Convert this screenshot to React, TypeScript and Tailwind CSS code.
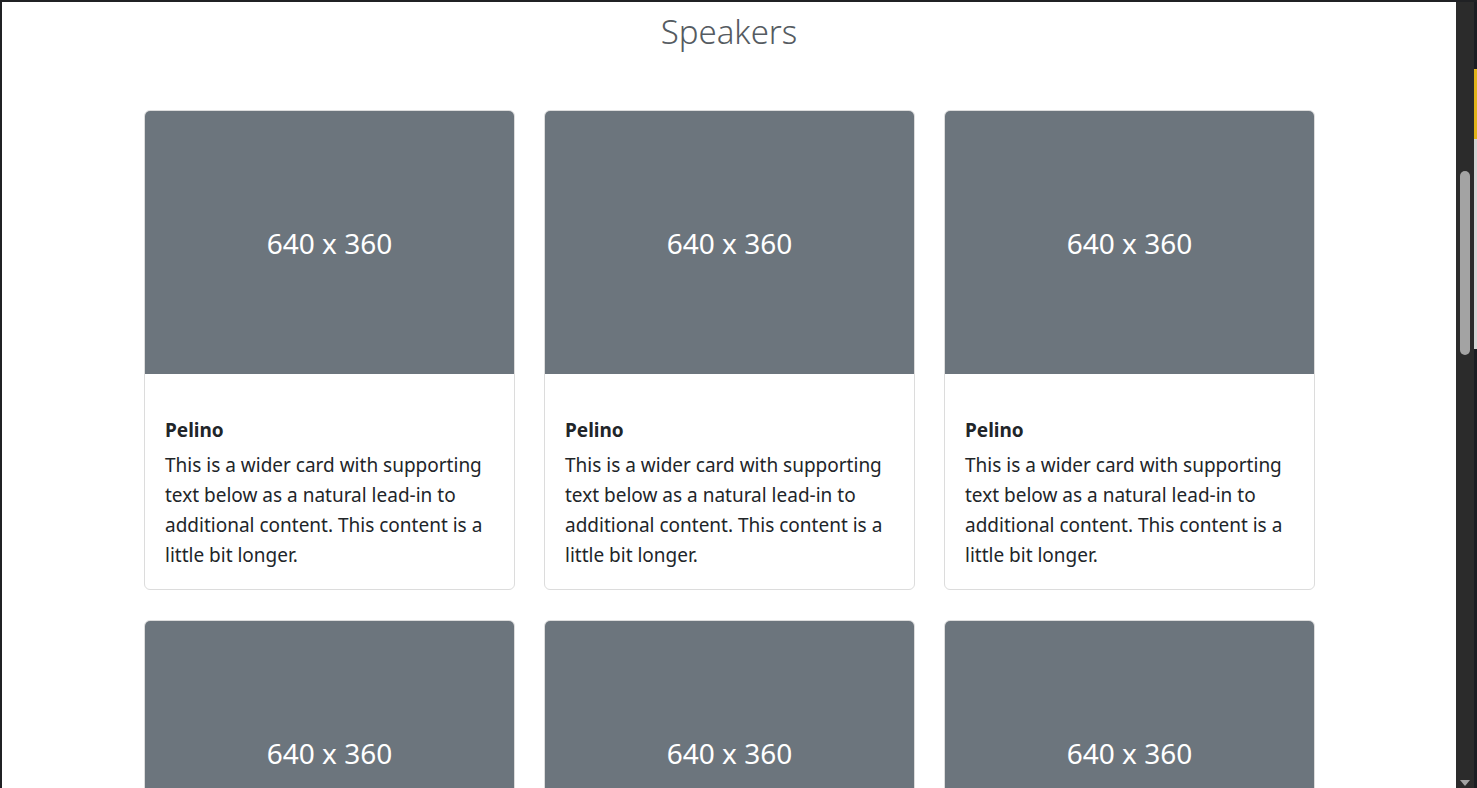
import React from "react";

const speakers = [1, 2, 3, 4, 5, 6];

function SpeakerCard() {
  return (
    <div className="flex flex-col overflow-hidden rounded-[6px] border border-[#dcdcdc] bg-white">
      <div className="flex h-[263px] items-center justify-center bg-[#6c757d] text-[28px] text-white">
        640 x 360
      </div>
      <div className="px-[20px] pb-[19px] pt-[41px]">
        <h5 className="mb-[5px] text-[19px] font-bold leading-[30px] text-[#212529]">Pelino</h5>
        <p className="text-[19px] leading-[30px] text-[#212529]">
          This is a wider card with supporting text below as a natural lead-in to additional content. This content is
          a little bit longer.
        </p>
      </div>
    </div>
  );
}

export default function App() {
  return (
    <div className="flex h-[788px] w-[1477px] flex-col overflow-hidden bg-[#202124] font-['Noto_Sans',sans-serif]">
      <div className="h-[2px] shrink-0" />
      <div className="flex min-h-0 flex-1">
        <div className="w-[2px] shrink-0" />
        <main className="min-w-0 flex-1 overflow-hidden bg-white">
          <h2 className="pt-[8px] text-center text-[33px] font-light leading-[44px] text-[#555b61]">Speakers</h2>
          <div className="ml-[142px] mt-[56px] grid w-[1171px] grid-cols-3 gap-x-[29px] gap-y-[30px]">
            {speakers.map((s) => (
              <SpeakerCard key={s} />
            ))}
          </div>
        </main>
        <div className="relative w-[18px] shrink-0 bg-[#2b2b2b]">
          <div className="absolute left-[4px] top-[169px] h-[184px] w-[10px] rounded-full bg-[#a3a3a3]" />
          <div className="absolute bottom-[2px] left-[4px] h-0 w-0 border-x-[5px] border-t-[6px] border-x-transparent border-t-[#a3a3a3]" />
        </div>
        <div className="relative w-[3px] shrink-0 bg-[#1b1d22]">
          <div className="absolute top-[67px] h-[70px] w-[3px] bg-[#e0b31a]" />
          <div className="absolute top-[137px] h-[210px] w-[3px] bg-[#d4d4d4]" />
        </div>
      </div>
    </div>
  );
}
